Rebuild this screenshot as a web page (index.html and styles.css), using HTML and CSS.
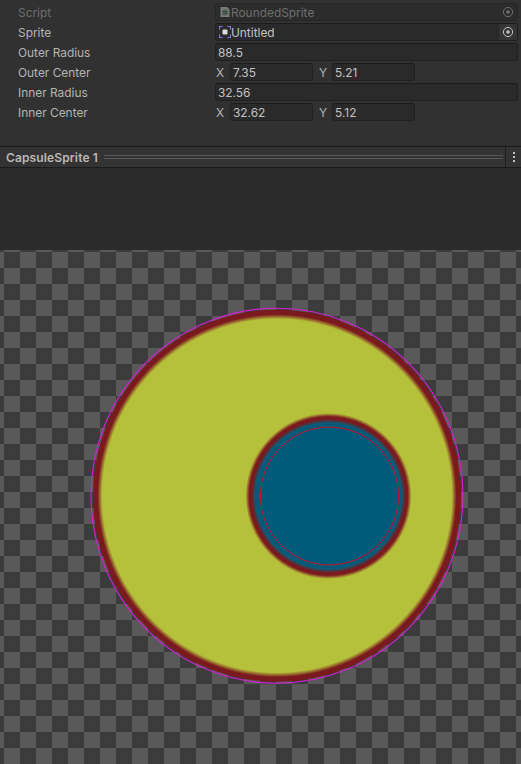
FILE: index.html
```html
<!DOCTYPE html>
<html lang="en">
<head>
<meta charset="utf-8">
<title>CapsuleSprite 1</title>
<link rel="stylesheet" href="styles.css">
</head>
<body>
<section class="inspector">
  <div class="row disabled">
    <span class="label">Script</span>
    <div class="field object">
      <svg class="obj-icon" viewBox="0 0 12 12"><path d="M1.500 1h6.500l2.500 2.500V11h-9z" fill="#9a9a9a"/><path d="M5 3.500v6M7 3.500v6M3 5.400h6M3 7.600h6" stroke="#2f5a3c" stroke-width="1" fill="none"/></svg>
      <span class="value">RoundedSprite</span>
      <span class="picker"><svg viewBox="0 0 12 12"><circle cx="6" cy="6" r="4.600" fill="none" stroke="currentColor" stroke-width="1"/><circle cx="6" cy="6" r="1.800" fill="currentColor"/></svg></span>
    </div>
  </div>
  <div class="row">
    <span class="label">Sprite</span>
    <div class="field object">
      <svg class="obj-icon" viewBox="0 0 12 12"><path d="M.5 3.500V.5h3M8.500 .5h3v3M11.500 8.500v3h-3M3.500 11.500h-3v-3" fill="none" stroke="#8f6fe8" stroke-width="1.200"/><rect x="3.500" y="3.500" width="5" height="5" rx="1" fill="#dcdcdc"/></svg>
      <span class="value">Untitled</span>
      <span class="picker active"><svg viewBox="0 0 12 12"><circle cx="6" cy="6" r="4.600" fill="none" stroke="currentColor" stroke-width="1"/><circle cx="6" cy="6" r="1.800" fill="currentColor"/></svg></span>
    </div>
  </div>
  <div class="row">
    <span class="label">Outer Radius</span>
    <div class="field"><span class="value">88.5</span></div>
  </div>
  <div class="row">
    <span class="label">Outer Center</span>
    <div class="vector">
      <span class="axis">X</span><div class="field short"><span class="value">7.35</span></div>
      <span class="axis axis-y">Y</span><div class="field short"><span class="value">5.21</span></div>
    </div>
  </div>
  <div class="row">
    <span class="label">Inner Radius</span>
    <div class="field"><span class="value">32.56</span></div>
  </div>
  <div class="row">
    <span class="label">Inner Center</span>
    <div class="vector">
      <span class="axis">X</span><div class="field short"><span class="value">32.62</span></div>
      <span class="axis axis-y">Y</span><div class="field short"><span class="value">5.12</span></div>
    </div>
  </div>
</section>
<header class="component-bar">
  <span class="component-name">CapsuleSprite 1</span>
  <span class="grip"></span>
  <span class="menu"><i></i><i></i><i></i></span>
</header>
<div class="spacer"></div>
<div class="preview">
  <svg class="canvas" viewBox="0 0 521 514" aria-hidden="true">
    <defs>
      <radialGradient id="outerFill">
        <stop offset="0.95" stop-color="#b6c13b"/>
        <stop offset="0.975" stop-color="#7b1a1e"/>
        <stop offset="1" stop-color="#7b1a1e"/>
      </radialGradient>
      <radialGradient id="innerFill">
        <stop offset="0.88" stop-color="#0a5c78"/>
        <stop offset="0.925" stop-color="#7b1a1e"/>
        <stop offset="0.955" stop-color="#7b1a1e"/>
        <stop offset="1" stop-color="#b6c13b"/>
      </radialGradient>
    </defs>
    <ellipse cx="277" cy="245.750" rx="184" ry="186" fill="url(#outerFill)"/>
    <ellipse cx="277" cy="245.750" rx="186" ry="187.500" fill="none" stroke="#d420d4" stroke-width="1.100"/>
    <circle cx="328.500" cy="246" r="83" fill="url(#innerFill)"/>
    <circle cx="328.500" cy="246" r="72" fill="#005a7a"/>
    <circle cx="329.500" cy="246" r="69" fill="none" stroke="#d4102c" stroke-width="1"/>
  </svg>
</div>
</body>
</html>
```
FILE: styles.css
```css
* {
  box-sizing: border-box;
}

html,
body {
  margin: 0;
  height: 100%;
}

body {
  width: 521px;
  height: 764px;
  overflow: hidden;
  display: flex;
  flex-direction: column;
  background: #2b2b2b;
  color: #bdbdbd;
  font-family: Inter, "Liberation Sans", sans-serif;
  font-size: 11.9px;
}

.inspector {
  height: 146px;
  padding-top: 2px;
  background: #313131;
}

.row {
  display: flex;
  align-items: center;
  height: 20px;
  padding: 0 3px 0 18px;
}

.label {
  width: 197px;
  flex: none;
  color: #b4b4b4;
}

.field {
  flex: 1;
  display: flex;
  align-items: center;
  height: 18px;
  padding-left: 2px;
  background: #2a2a2a;
  border: 1px solid #212121;
  border-top-color: #1c1c1c;
  border-radius: 3px;
  color: #c2c2c2;
  white-space: nowrap;
}

.object {
  padding-left: 3px;
}

.obj-icon {
  width: 12px;
  height: 12px;
  flex: none;
}

.value {
  flex: 1;
}

.picker {
  flex: none;
  width: 18px;
  height: 16px;
  display: flex;
  align-items: center;
  justify-content: center;
  color: #6f6f6f;
  border-radius: 0 2px 2px 0;
}

.picker svg {
  width: 12px;
  height: 12px;
}

.picker.active {
  background: #353535;
  color: #c4c4c4;
}

.disabled .label,
.disabled .value {
  color: #6e6e6e;
}

.disabled .field {
  background: #2c2c2c;
  border-color: #262626;
}

.disabled .obj-icon {
  opacity: 0.7;
}

.vector {
  display: flex;
  align-items: center;
  height: 18px;
}

.axis {
  width: 15px;
  padding-left: 1px;
  flex: none;
  color: #b4b4b4;
}

.axis-y {
  width: 14px;
  margin-left: 5px;
}

.short {
  flex: none;
  width: 83px;
}

.component-bar {
  height: 22px;
  flex: none;
  display: flex;
  align-items: center;
  background: #333333;
  border-top: 1px solid #1b1b1b;
  border-bottom: 1px solid #1b1b1b;
  padding-left: 6px;
}

.component-name {
  font-size: 12px;
  font-weight: 600;
  letter-spacing: 0.13px;
  color: #b8b8b8;
  white-space: nowrap;
  width: 98px;
  flex: none;
}

.grip {
  width: 399px;
  height: 4px;
  flex: none;
  border-top: 1px solid #575757;
  border-bottom: 1px solid #575757;
}

.menu {
  margin-left: 2px;
  flex: 1;
  align-self: stretch;
  display: flex;
  flex-direction: column;
  align-items: center;
  justify-content: center;
  gap: 2px;
  border-left: 1px solid #1f1f1f;
}

.menu i {
  width: 2px;
  height: 2px;
  background: #c0c0c0;
}

.spacer {
  height: 82px;
  flex: none;
  background: #2b2b2b;
}

.preview {
  flex: 1;
  position: relative;
  background-color: #3c3c3c;
  background-image: conic-gradient(#595959 25%, #3c3c3c 0 50%, #595959 0 75%, #3c3c3c 0);
  background-size: 32px 32px;
  background-position: 4px 2px;
}

.canvas {
  position: absolute;
  inset: 0;
  width: 521px;
  height: 514px;
}
```
